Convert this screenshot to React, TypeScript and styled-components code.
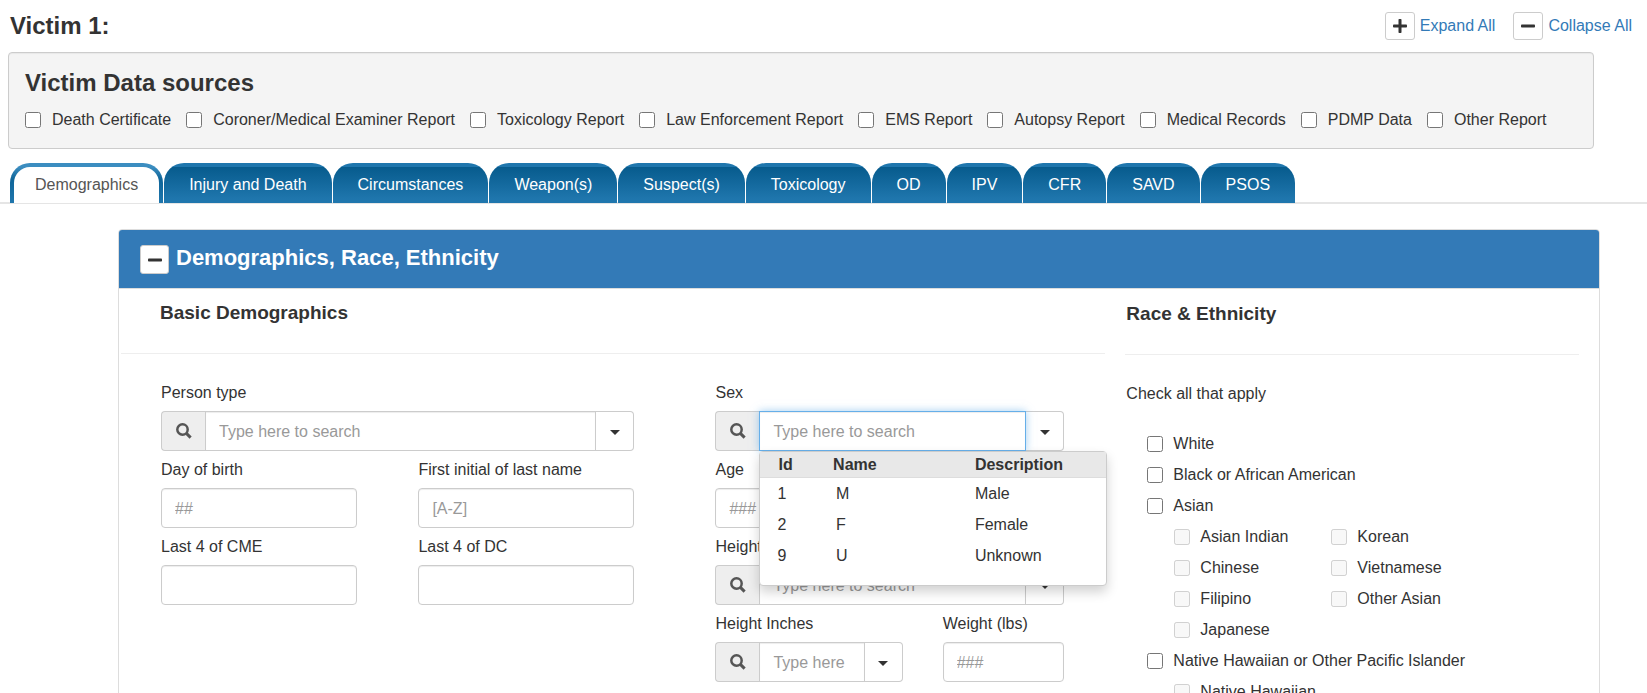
import React from "react";
import styled, { createGlobalStyle, css } from "styled-components";

const GlobalStyle = createGlobalStyle`
  *, *::before, *::after { box-sizing: border-box; }
  body {
    margin: 0;
    background: #fff;
    color: #333;
    font: 16px/22px "Liberation Sans", Arial, Helvetica, sans-serif;
  }
  input, button { font: inherit; color: inherit; }
`;

const Shell = styled.div`
  height: 100vh;
  overflow-y: auto;
  overflow-x: hidden;
  scrollbar-width: none;
`;

const PageHeader = styled.header`
  display: flex;
  align-items: center;
  justify-content: space-between;
  height: 52px;
  padding: 0 15px 0 10px;
`;

const Title = styled.h2`
  margin: 0;
  font-size: 24px;
  line-height: 26px;
  font-weight: bold;
`;

const HeaderActions = styled.div`
  display: flex;
  gap: 18px;
`;

const ActionGroup = styled.div`
  display: flex;
  align-items: center;
  gap: 5px;
`;

const TextLink = styled.a`
  color: #337ab7;
  text-decoration: none;
`;

const ToggleButton = styled.button<{ $square?: boolean }>`
  display: flex;
  flex: none;
  align-items: center;
  justify-content: center;
  width: ${({ $square }) => ($square ? 29 : 30)}px;
  height: ${({ $square }) => ($square ? 29 : 28)}px;
  padding: 0;
  border: 1px solid #ccc;
  border-radius: 3px;
  background: #fff;
  color: #333;
`;

const SourcesPanel = styled.section`
  margin: 0 53px 14px 8px;
  padding: 17px 16px;
  border: 1px solid #ccc;
  border-radius: 4px;
  background: #f4f4f4;
  box-shadow: inset 0 1px 1px rgba(0, 0, 0, 0.05);
`;

const SourceList = styled.div`
  display: flex;
  flex-wrap: wrap;
  column-gap: 15px;
  margin-top: 13px;
`;

const CheckLabel = styled.label<{ $gap: number }>`
  display: flex;
  align-items: center;
  gap: ${({ $gap }) => $gap}px;
`;

const CheckInput = styled.input`
  width: 16px;
  height: 16px;
  margin: 0;
  flex: none;
`;

const TabBar = styled.nav`
  display: flex;
  gap: 1px;
  padding-left: 10px;
  background: linear-gradient(#e5e5e5, #e5e5e5) bottom / 100% 2px no-repeat;
`;

const Tab = styled.button<{ $active?: boolean }>`
  height: 40px;
  margin-bottom: 1px;
  padding: 0 21px;
  border: 4px solid transparent;
  border-bottom: 0;
  border-radius: 20px 20px 0 0;
  ${({ $active }) =>
    $active
      ? css`
          color: #555;
          background:
            linear-gradient(#fff, #fff) padding-box,
            linear-gradient(#3b8dc0 4px, #0f6599 16px, #1f76ad) border-box;
        `
      : css`
          color: #fff;
          background: linear-gradient(#1f76ad 4px, #075b8d 4px, #1f76ad 36px) border-box;
        `}
`;

const Card = styled.section`
  margin: 25px 47px 40px 118px;
  border: 1px solid #ddd;
  border-radius: 4px;
`;

const CardHeader = styled.div`
  display: flex;
  align-items: flex-start;
  gap: 7px;
  padding: 15px 21px 14px;
  border-bottom: 1px solid #ddd;
  border-radius: 3px 3px 0 0;
  background: #337ab7;
`;

const CardTitle = styled.h3`
  margin: 0;
  color: #fff;
  font-size: 22px;
  line-height: 26px;
`;

const CardBody = styled.div`
  display: grid;
  grid-template-columns: 217fr 100fr;
  column-gap: 20px;
  padding: 0 20px 0 2px;
`;

const Column = styled.div<{ $top: number }>`
  padding-top: ${({ $top }) => $top}px;
`;

const SectionTitle = styled.h4<{ $indent?: boolean }>`
  margin: 0;
  padding: 0 0 28px ${({ $indent }) => ($indent ? 39 : 1)}px;
  border-bottom: 1px solid #eee;
  font-size: 19px;
  line-height: 24px;
`;

const FormColumns = styled.div`
  display: grid;
  grid-template-columns: 19fr 14fr;
  column-gap: 81px;
  padding: 20px 41px 0 40px;
`;

const FieldGrid = styled.div<{ $columns: string; $gap: number }>`
  display: grid;
  grid-template-columns: ${({ $columns }) => $columns};
  column-gap: ${({ $gap }) => $gap}px;
  align-content: start;
`;

const FieldBox = styled.div<{ $wide?: boolean }>`
  position: relative;
  min-width: 0;
  padding-top: 8px;
  ${({ $wide }) => $wide && "grid-column: 1 / -1;"}
`;

const FieldLabel = styled.label`
  display: block;
  margin-bottom: 7px;
`;

const TextInput = styled.input<{ $grouped?: boolean; $active?: boolean }>`
  display: block;
  width: 100%;
  min-width: 0;
  height: 40px;
  padding: 2px 13px 0;
  border: 1px solid #ccc;
  border-radius: ${({ $grouped }) => ($grouped ? 0 : 4)}px;
  background: #fff;
  box-shadow: inset 0 1px 1px rgba(0, 0, 0, 0.075);
  outline: none;
  &::placeholder { color: #999; opacity: 1; }
  ${({ $active }) =>
    $active &&
    css`
      position: relative;
      z-index: 1;
      border-color: #66afe9;
      box-shadow: inset 0 1px 1px rgba(0, 0, 0, 0.075), 0 0 8px rgba(102, 175, 233, 0.6);
    `}
`;

const InputGroup = styled.div`
  display: flex;
`;

const Addon = styled.span`
  display: flex;
  flex: none;
  align-items: center;
  justify-content: center;
  width: 44px;
  border: 1px solid #ccc;
  border-right: 0;
  border-radius: 4px 0 0 4px;
  background: #eee;
  color: #555;
`;

const CaretButton = styled.button`
  display: flex;
  flex: none;
  align-items: center;
  justify-content: center;
  width: 38px;
  padding: 2px 0 0;
  border: 1px solid #ccc;
  border-left: 0;
  border-radius: 0 4px 4px 0;
  background: #fff;
`;

const Caret = styled.span`
  border: 5px solid transparent;
  border-top-color: #333;
  border-bottom: 0;
`;

const Menu = styled.div`
  position: absolute;
  top: 100%;
  left: 44px;
  right: -43px;
  z-index: 5;
  padding-bottom: 15px;
  border: 1px solid #ccc;
  border-radius: 4px;
  background: #fff;
  box-shadow: 0 6px 12px rgba(0, 0, 0, 0.18);
`;

const MenuTable = styled.table`
  width: 100%;
  border-collapse: collapse;
  table-layout: fixed;
  text-align: left;
  th {
    height: 25px;
    padding: 1px 0 0 18px;
    border-bottom: 1px solid #ddd;
    background: #e8e8e8;
  }
  td {
    height: 31px;
    padding: 2px 0 0 17px;
  }
  th:nth-child(n + 2) { padding-left: 0; }
  td:nth-child(2) { padding-left: 3px; }
  td:nth-child(3) { padding-left: 0; }
`;

const Hint = styled.p`
  margin: 28px 0 28px 1px;
`;

const CheckList = styled.div`
  display: flex;
  flex-direction: column;
  gap: 9px;
  padding-left: 22px;
`;

const SubList = styled.div`
  display: grid;
  grid-template-columns: repeat(2, 157px);
  grid-template-rows: repeat(4, auto);
  grid-auto-flow: column;
  row-gap: 9px;
  padding-left: 27px;
`;

const PlusIcon = () => (
  <svg width="14" height="14" viewBox="0 0 14 14" fill="currentColor" aria-hidden="true">
    <rect x="0" y="5.5" width="14" height="3" rx="0.8" />
    <rect x="5.5" y="0" width="3" height="14" rx="0.8" />
  </svg>
);

const MinusIcon = () => (
  <svg width="14" height="14" viewBox="0 0 14 14" fill="currentColor" aria-hidden="true">
    <rect x="0" y="5.5" width="14" height="3" rx="0.8" />
  </svg>
);

const SearchIcon = () => (
  <svg width="16" height="16" viewBox="0 0 16 16" fill="none" aria-hidden="true">
    <circle cx="6.5" cy="6.5" r="5.2" stroke="currentColor" strokeWidth="2.5" />
    <path d="M10.4 10.4l4.2 4.2" stroke="currentColor" strokeWidth="3" />
  </svg>
);

const Check = ({
  label,
  disabled,
  gap = 10,
}: {
  label: string;
  disabled?: boolean;
  gap?: number;
}) => (
  <CheckLabel $gap={gap}>
    <CheckInput type="checkbox" disabled={disabled} />
    {label}
  </CheckLabel>
);

type FieldProps = {
  id: string;
  label: string;
  placeholder?: string;
  wide?: boolean;
};

const Field = ({ id, label, placeholder, wide }: FieldProps) => (
  <FieldBox $wide={wide}>
    <FieldLabel htmlFor={id}>{label}</FieldLabel>
    <TextInput id={id} type="text" placeholder={placeholder} />
  </FieldBox>
);

const SearchField = ({
  id,
  label,
  wide,
  active,
  placeholder = "Type here to search",
  children,
}: FieldProps & { active?: boolean; children?: React.ReactNode }) => (
  <FieldBox $wide={wide}>
    <FieldLabel htmlFor={id}>{label}</FieldLabel>
    <InputGroup>
      <Addon>
        <SearchIcon />
      </Addon>
      <TextInput id={id} type="text" placeholder={placeholder} $grouped $active={active} />
      <CaretButton type="button" aria-label={`Show ${label} options`}>
        <Caret />
      </CaretButton>
    </InputGroup>
    {children}
  </FieldBox>
);

const sources = [
  "Death Certificate",
  "Coroner/Medical Examiner Report",
  "Toxicology Report",
  "Law Enforcement Report",
  "EMS Report",
  "Autopsy Report",
  "Medical Records",
  "PDMP Data",
  "Other Report",
];

const tabs = [
  "Demographics",
  "Injury and Death",
  "Circumstances",
  "Weapon(s)",
  "Suspect(s)",
  "Toxicology",
  "OD",
  "IPV",
  "CFR",
  "SAVD",
  "PSOS",
];

const sexOptions = [
  ["1", "M", "Male"],
  ["2", "F", "Female"],
  ["9", "U", "Unknown"],
];

const asianGroups = [
  "Asian Indian",
  "Chinese",
  "Filipino",
  "Japanese",
  "Korean",
  "Vietnamese",
  "Other Asian",
];

export default function App() {
  return (
    <Shell>
      <GlobalStyle />
      <PageHeader>
        <Title>Victim 1:</Title>
        <HeaderActions>
          <ActionGroup>
            <ToggleButton type="button" aria-label="Expand all sections">
              <PlusIcon />
            </ToggleButton>
            <TextLink href="#expand">Expand All</TextLink>
          </ActionGroup>
          <ActionGroup>
            <ToggleButton type="button" aria-label="Collapse all sections">
              <MinusIcon />
            </ToggleButton>
            <TextLink href="#collapse">Collapse All</TextLink>
          </ActionGroup>
        </HeaderActions>
      </PageHeader>

      <SourcesPanel>
        <Title>Victim Data sources</Title>
        <SourceList>
          {sources.map((s) => (
            <Check key={s} label={s} gap={11} />
          ))}
        </SourceList>
      </SourcesPanel>

      <TabBar>
        {tabs.map((t, i) => (
          <Tab key={t} type="button" $active={i === 0}>
            {t}
          </Tab>
        ))}
      </TabBar>

      <Card>
        <CardHeader>
          <ToggleButton $square type="button" aria-label="Collapse section">
            <MinusIcon />
          </ToggleButton>
          <CardTitle>Demographics, Race, Ethnicity</CardTitle>
        </CardHeader>
        <CardBody>
          <Column $top={12}>
            <SectionTitle $indent>Basic Demographics</SectionTitle>
            <FormColumns>
              <FieldGrid $columns="10fr 11fr" $gap={61}>
                <SearchField id="person-type" label="Person type" wide />
                <Field id="birth-day" label="Day of birth" placeholder="##" />
                <Field id="initial" label="First initial of last name" placeholder="[A-Z]" />
                <Field id="cme" label="Last 4 of CME" />
                <Field id="dc" label="Last 4 of DC" />
              </FieldGrid>
              <FieldGrid $columns="20fr 13fr" $gap={40}>
                <SearchField id="sex" label="Sex" wide active>
                  <Menu>
                    <MenuTable>
                      <colgroup>
                        <col width="21%" />
                        <col width="41%" />
                        <col />
                      </colgroup>
                      <thead>
                        <tr>
                          <th>Id</th>
                          <th>Name</th>
                          <th>Description</th>
                        </tr>
                      </thead>
                      <tbody>
                        {sexOptions.map(([code, name, description]) => (
                          <tr key={code}>
                            <td>{code}</td>
                            <td>{name}</td>
                            <td>{description}</td>
                          </tr>
                        ))}
                      </tbody>
                    </MenuTable>
                  </Menu>
                </SearchField>
                <Field id="age" label="Age" placeholder="###" wide />
                <SearchField id="height-feet" label="Height Feet" wide />
                <SearchField id="height-inches" label="Height Inches" placeholder="Type here" />
                <Field id="weight" label="Weight (lbs)" placeholder="###" />
              </FieldGrid>
            </FormColumns>
          </Column>
          <Column $top={13}>
            <SectionTitle>Race &amp; Ethnicity</SectionTitle>
            <Hint>Check all that apply</Hint>
            <CheckList>
              <Check label="White" />
              <Check label="Black or African American" />
              <Check label="Asian" />
              <SubList>
                {asianGroups.map((g) => (
                  <Check key={g} label={g} disabled />
                ))}
              </SubList>
              <Check label="Native Hawaiian or Other Pacific Islander" />
              <SubList>
                <Check label="Native Hawaiian" disabled />
              </SubList>
            </CheckList>
          </Column>
        </CardBody>
      </Card>
    </Shell>
  );
}
